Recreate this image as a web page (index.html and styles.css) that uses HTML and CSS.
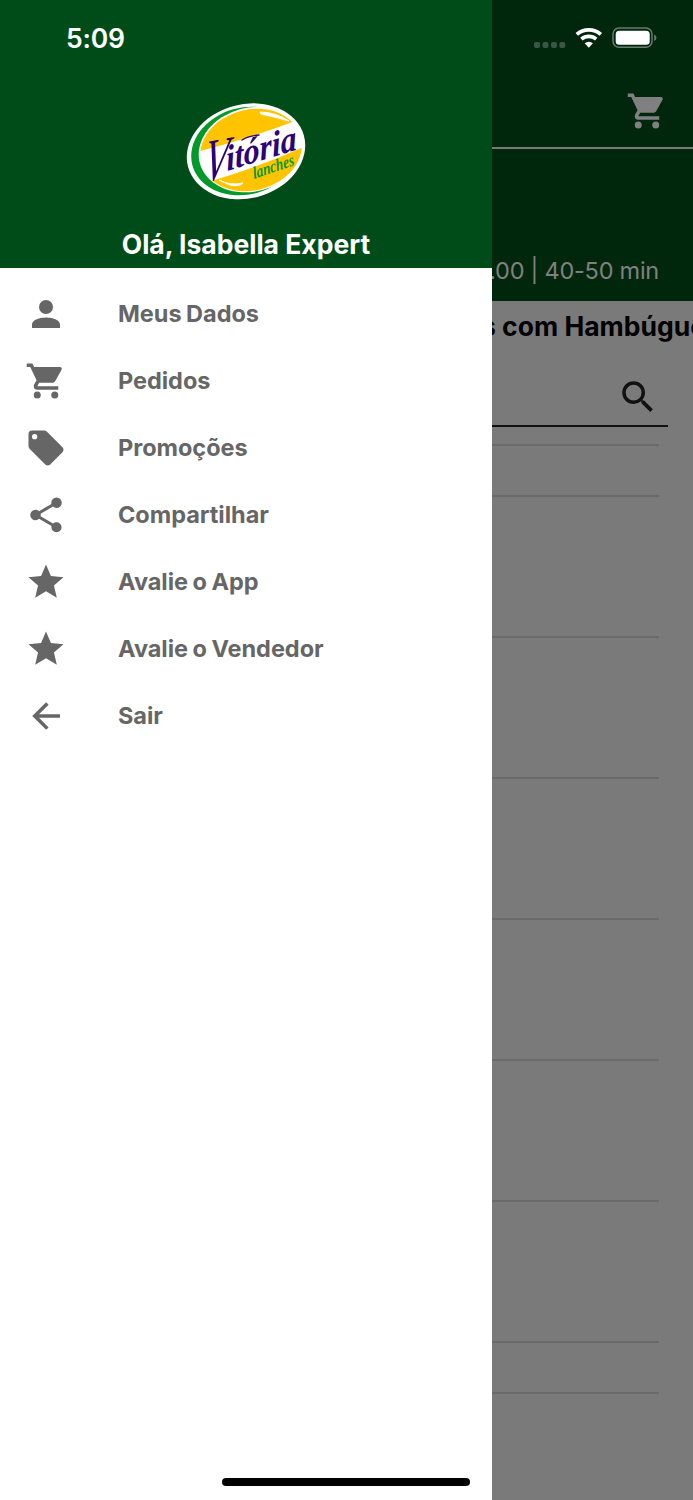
FILE: index.html
```
<!DOCTYPE html>
<html lang="pt-BR">
<head>
<meta charset="utf-8">
<meta name="viewport" content="width=device-width">
<title>Vitória Lanches</title>
<link rel="stylesheet" href="styles.css">
</head>
<body>
<div class="screen">
  <aside class="drawer">
    <header class="drawer-head">
      <time class="clock">5:09</time>
      <svg class="logo" viewBox="0 0 140 120" role="img" aria-label="Vitória lanches">
        <defs><clipPath id="disc"><ellipse cx="75" cy="58" rx="51.5" ry="40.5" transform="rotate(-15 75 58)"/></clipPath></defs>
        <ellipse cx="70" cy="59.3" rx="60" ry="47" transform="rotate(-15 70 59.3)" fill="#fff"/>
        <ellipse cx="69.5" cy="59" rx="55" ry="43.5" transform="rotate(-15 69.5 59)" fill="#009a2b"/>
        <ellipse cx="75.5" cy="57.5" rx="53.5" ry="42" transform="rotate(-15 75.5 57.5)" fill="#fff"/>
        <g clip-path="url(#disc)">
          <path d="M20 60 Q70 48 130 25V0H20Z" fill="#ffc400"/>
          <path d="M28 91 Q76 78 130 54V110H28Z" fill="#ffc400"/>
        </g>
        <path d="M84 20Q99 20 113 29Q99 25 85 22ZM43 88Q54 94 67 91Q64 95 54 93Z" fill="#fff" stroke="#fff" stroke-linejoin="round"/>
        <text class="logo-name logo-initial" transform="translate(27 90) rotate(-10) skewX(-16) scale(.7 1.06)">V</text>
        <text class="logo-name" transform="translate(51 79) rotate(-17) skewX(-12) scale(.92 .98)">itória</text>
        <path d="M66 48Q72 44 83 43" fill="none" stroke="#2b0078" stroke-width="1.4" stroke-linecap="round"/>
        <text class="logo-sub" transform="translate(78 87) rotate(-19) skewX(-8)" textLength="43" lengthAdjust="spacingAndGlyphs">lanches</text>
      </svg>
      <h1 class="greeting">Olá, Isabella Expert</h1>
    </header>
    <nav class="menu">
      <a class="item"><svg class="icon" viewBox="0 0 24 24"><path d="M12 4a4 4 0 1 1 0 8 4 4 0 0 1 0-8m0 10c4.42 0 8 1.79 8 4v2H4v-2c0-2.21 3.58-4 8-4"/></svg><span>Meus Dados</span></a>
      <a class="item"><svg class="icon" viewBox="0 0 24 24"><path id="cart" d="M17 18a2 2 0 1 0 0 4 2 2 0 0 0 0-4M1 2v2h2l3.6 7.59-1.36 2.45C5.09 14.32 5 14.65 5 15a2 2 0 0 0 2 2h12v-2H7.42a.25.25 0 0 1-.25-.25l.03-.12.9-1.63h7.45c.75 0 1.41-.42 1.75-1.03l3.58-6.47A1 1 0 0 0 20 4H5.21l-.94-2M7 18a2 2 0 1 0 0 4 2 2 0 0 0 0-4"/></svg><span>Pedidos</span></a>
      <a class="item"><svg class="icon" viewBox="0 0 24 24"><path d="M5.5 7a1.5 1.5 0 1 1 0-3 1.5 1.5 0 0 1 0 3m15.91 4.58-9-9C12.05 2.22 11.55 2 11 2H4a2 2 0 0 0-2 2v7c0 .55.22 1.05.59 1.41l8.99 9c.37.36.87.59 1.42.59s1.05-.23 1.41-.59l7-7c.37-.36.59-.86.59-1.41 0-.56-.23-1.06-.59-1.42"/></svg><span>Promoções</span></a>
      <a class="item"><svg class="icon" viewBox="0 0 24 24"><path d="M18 16.08c-.76 0-1.44.3-1.96.77L8.91 12.7c.05-.23.09-.46.09-.7s-.04-.47-.09-.7l7.05-4.11c.54.5 1.25.81 2.04.81a3 3 0 1 0-3-3c0 .24.04.47.09.7L8.04 9.81C7.5 9.31 6.79 9 6 9a3 3 0 0 0 0 6c.79 0 1.5-.31 2.04-.81l7.12 4.15c-.05.21-.08.43-.08.66a2.92 2.92 0 1 0 2.92-2.92"/></svg><span>Compartilhar</span></a>
      <a class="item"><svg class="icon" viewBox="0 0 24 24"><path d="M12 17.27 18.18 21l-1.64-7.03L22 9.24l-7.19-.62L12 2 9.19 8.62 2 9.24l5.45 4.73L5.82 21z"/></svg><span>Avalie o App</span></a>
      <a class="item"><svg class="icon" viewBox="0 0 24 24"><path d="M12 17.27 18.18 21l-1.64-7.03L22 9.24l-7.19-.62L12 2 9.19 8.62 2 9.24l5.45 4.73L5.82 21z"/></svg><span>Avalie o Vendedor</span></a>
      <a class="item"><svg class="icon" viewBox="0 0 24 24"><path d="M20 11v2H8l5.5 5.5-1.42 1.42L4.16 12l7.92-7.92L13.5 5.5 8 11z"/></svg><span>Sair</span></a>
    </nav>
    <div class="home-bar"></div>
  </aside>
  <main class="page">
    <header class="page-head">
      <svg class="status" viewBox="0 0 130 24">
        <g fill="#395744"><rect x="2" y="16" width="6" height="6" rx="2"/><rect x="10.5" y="16" width="6" height="6" rx="2"/><rect x="19" y="16" width="6" height="6" rx="2"/><rect x="27.3" y="16" width="6" height="6" rx="2"/></g>
        <g fill="none" stroke="#fff" stroke-width="3.7"><path d="M44.8 8.4a18 18 0 0 1 24 0"/><path d="M49.4 13.1a11.3 11.3 0 0 1 14.8 0"/></g>
        <path d="M52.7 17.3a6 6 0 0 1 8.2 0L56.8 21.7z" fill="#fff"/>
        <rect x="81" y="2" width="39" height="19.3" rx="6" fill="none" stroke="#667c6d" stroke-width="1.5"/>
        <rect x="83.7" y="4.7" width="34" height="14" rx="3.5" fill="#fff"/>
        <path d="M122.2 8.5q2.3 1 2.3 3.2t-2.3 3.2z" fill="#667c6d"/>
      </svg>
      <div class="toolbar"><svg class="icon" viewBox="0 0 24 24"><use href="#cart"/></svg></div>
      <p class="delivery">.00 | 40-50 min</p>
    </header>
    <h2 class="category">s com Hambúgue</h2>
    <div class="search"><svg class="icon" viewBox="0 0 24 24"><path d="M9.5 3A6.5 6.5 0 0 1 16 9.5c0 1.61-.59 3.09-1.56 4.23l.27.27h.79l5 5-1.5 1.5-5-5v-.79l-.27-.27A6.516 6.516 0 0 1 9.5 16a6.5 6.5 0 0 1 0-13m0 2a4.5 4.5 0 1 0 0 9 4.5 4.5 0 0 0 0-9"/></svg></div>
    <div class="list">
      <div class="row short"></div>
      <div class="row"></div><div class="row"></div><div class="row"></div><div class="row"></div><div class="row"></div><div class="row"></div>
      <div class="row short"></div>
      <div class="row"></div>
    </div>
  </main>
</div>
</body>
</html>
```
FILE: styles.css
```
* { box-sizing: border-box; }
body { margin: 0; font-family: Inter, "Liberation Sans", sans-serif; }
h1, h2, p { margin: 0; }
.screen { display: flex; width: 693px; height: 1500px; overflow: hidden; background: #7a7a7a; }
.icon { display: block; width: 42px; height: 42px; fill: currentColor; flex: none; }

.drawer { display: flex; flex-direction: column; flex: none; width: 492px; background: #fff; }
.drawer-head { display: flex; flex-direction: column; align-items: center; flex: none; height: 268px; padding-top: 22px; background: #004c19; color: #fff; }
.clock { align-self: flex-start; margin-left: 66px; font-size: 26.5px; font-weight: 600; line-height: 32px; letter-spacing: -.2px; }
.logo { display: block; flex: none; width: 140px; height: 120px; margin-top: 38px; }
.logo-name { font-family: "Liberation Serif", serif; font-style: italic; font-weight: 700; font-size: 36px; fill: #2b0078; }
.logo-initial { font-size: 56px; font-weight: 400; }
.logo-sub { font-family: "Liberation Serif", serif; font-style: italic; font-weight: 700; font-size: 17px; fill: #009a2b; }
.greeting { margin-top: 16px; font-size: 26.5px; font-weight: 700; line-height: 32px; white-space: nowrap; }

.menu { display: flex; flex-direction: column; padding-top: 12px; }
.item { display: flex; align-items: center; gap: 51px; height: 67px; padding-left: 25px; color: #666; font-size: 23.5px; font-weight: 650; letter-spacing: -.03px; word-spacing: -1px; white-space: nowrap; }
.home-bar { width: 248px; height: 8px; margin: auto 0 14px 222px; border-radius: 4px; background: #000; }

.page { display: flex; flex-direction: column; flex: none; width: 201px; overflow: hidden; background: #7a7a7a; }
.page-head { flex: none; height: 301px; padding-top: 26px; background: #00260c; color: #808080; }
.status { display: block; width: 130px; height: 24px; margin-left: 40px; }
.toolbar { display: flex; justify-content: flex-end; height: 99px; padding: 40px 25px 0 0; border-bottom: 2px solid #777; }
.delivery { display: flex; justify-content: flex-end; margin-top: 107px; padding-right: 34px; font-size: 23.5px; line-height: 30px; letter-spacing: -.25px; white-space: nowrap; }
.category { flex: none; padding-top: 9px; margin-left: -11px; font-size: 26.5px; font-weight: 700; line-height: 32px; white-space: nowrap; color: #000; }
.search { display: flex; flex: none; justify-content: flex-end; width: 176px; height: 85px; padding: 34px 9px 0 0; border-bottom: 2px solid #111; color: #111; }
.list { flex: none; width: 167px; padding-top: 17px; }
.row { height: 141px; border-top: 2px solid #6a6a6a; }
.row.short { height: 51px; }
```
